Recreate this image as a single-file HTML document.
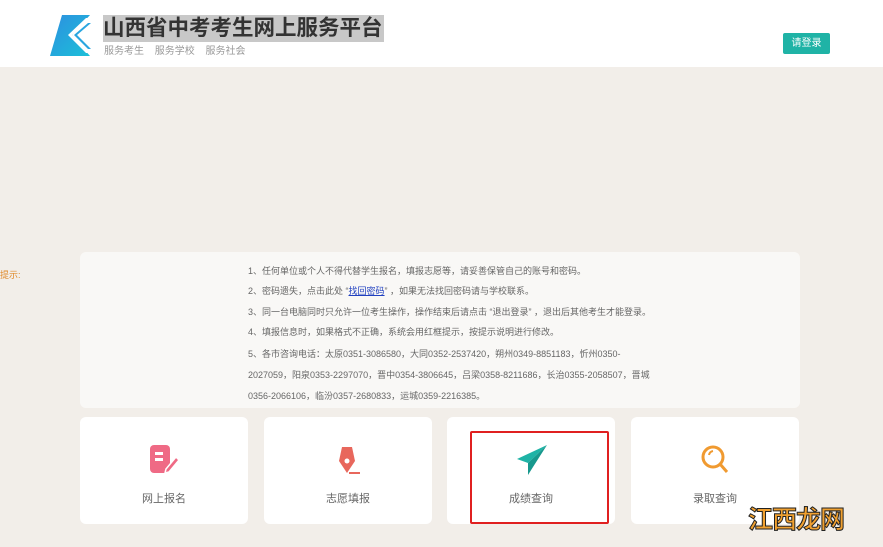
<!DOCTYPE html>
<html><head><meta charset="utf-8"><style>
body{margin:0;width:883px;height:547px;overflow:hidden;background:#f2eee9;font-family:"Liberation Sans","Noto Sans CJK SC",sans-serif;position:relative}
.hd{position:absolute;left:0;top:0;width:883px;height:67px;background:#fff}
.title{position:absolute;left:103px;top:15px;height:27px;background:#c8c8c8;font-size:21.5px;font-weight:bold;color:#333;line-height:27px;padding-right:1px}
.sub{position:absolute;left:104px;top:42px;font-size:10px;color:#999;word-spacing:8px}
.btn{position:absolute;left:783px;top:33px;width:47px;height:21px;background:#1fb3a6;color:#fff;font-size:10px;line-height:21px;text-align:center;border-radius:2px}
.tip{position:absolute;left:0;top:268px;font-size:9px;color:#e08a2a}
.note{position:absolute;left:80px;top:252px;width:720px;height:156px;background:#f9f8f6;border-radius:6px}
.note p{position:absolute;left:168px;margin:0;font-size:9px;color:#666;white-space:nowrap}
.card{position:absolute;top:417px;width:168px;height:107px;background:#fff;border-radius:6px}
.card span{position:absolute;left:0;width:100%;top:73px;text-align:center;font-size:11px;color:#666}
.card svg{position:absolute;left:68px;top:26px}
.red{position:absolute;left:470px;top:431px;width:135px;height:89px;border:2px solid #e02020;border-radius:2px}
.wm{position:absolute;left:748px;top:500px;font-size:25px;font-weight:bold;color:#f0a030;-webkit-text-stroke:1px #222;letter-spacing:-1px}
</style></head><body>
<div class="hd">
<svg style="position:absolute;left:50px;top:15px" width="42" height="41" viewBox="0 0 42 41"><defs><linearGradient id="g" x1="0" y1="0" x2="1" y2="1"><stop offset="0" stop-color="#2d8fe0"/><stop offset="1" stop-color="#1cc0d8"/></linearGradient></defs><polygon points="12,0 40,0 22,20 40,41 0,41" fill="url(#g)"/><polygon points="36,3 40,3 22,20 40,38 36,38 18,20" fill="#fff"/><polygon points="38,8 41,8 27,20 41,34 38,34 24,20" fill="#2aa6e0"/></svg>
<div class="title">山西省中考考生网上服务平台</div>
<div class="sub">服务考生 服务学校 服务社会</div>
<div class="btn">请登录</div>
</div>
<div class="tip">提示:</div>
<div class="note">
<p style="top:12px">1、任何单位或个人不得代替学生报名，填报志愿等，请妥善保管自己的账号和密码。</p>
<p style="top:32px">2、密码遗失，点击此处 “<u style="color:#2040c0">找回密码</u>” ，如果无法找回密码请与学校联系。</p>
<p style="top:53px">3、同一台电脑同时只允许一位考生操作，操作结束后请点击 “退出登录” ，退出后其他考生才能登录。</p>
<p style="top:73px">4、填报信息时，如果格式不正确，系统会用红框提示，按提示说明进行修改。</p>
<p style="top:95px">5、各市咨询电话：太原0351-3086580，大同0352-2537420，朔州0349-8851183，忻州0350-</p>
<p style="top:116px">2027059，阳泉0353-2297070，晋中0354-3806645，吕梁0358-8211686，长治0355-2058507，晋城</p>
<p style="top:137px">0356-2066106，临汾0357-2680833，运城0359-2216385。</p>
</div>
<div class="card" style="left:80px"><svg width="34" height="34" viewBox="0 0 34 34"><rect x="2" y="2" width="20" height="28" rx="4" fill="#ef6a85"/><rect x="7" y="9" width="8" height="3" fill="#fff"/><rect x="7" y="15" width="8" height="3" fill="#fff"/><path d="M18 26 L28 14 L31 17 L21 29 L17 30Z" fill="#ef6a85" stroke="#fff" stroke-width="1.5"/></svg><span>网上报名</span></div>
<div class="card" style="left:264px"><svg width="34" height="34" viewBox="0 0 34 34"><path d="M10 4 L20 4 L23 18 L15 30 L7 18Z" fill="#e8675c"/><circle cx="15" cy="18" r="2.5" fill="#fff"/><path d="M17 30 H28" stroke="#e8675c" stroke-width="2"/></svg><span>志愿填报</span></div>
<div class="card" style="left:447px"><svg width="34" height="34" viewBox="0 0 34 34"><path d="M32 2 L2 16 L13 20Z" fill="#1fb3a6"/><path d="M32 2 L13 20 L13 32 L18 24 Z" fill="#17988d"/></svg><span>成绩查询</span></div>
<div class="card" style="left:631px"><svg width="34" height="34" viewBox="0 0 34 34"><circle cx="14" cy="14" r="10" fill="none" stroke="#f09a30" stroke-width="3"/><path d="M10 12 a5 5 0 0 1 4-4" stroke="#f09a30" stroke-width="2" fill="none"/><path d="M21 21 L28 29" stroke="#f09a30" stroke-width="3"/></svg><span>录取查询</span></div>
<div class="red"></div>
<div class="wm">江西龙网</div>
</body></html>
